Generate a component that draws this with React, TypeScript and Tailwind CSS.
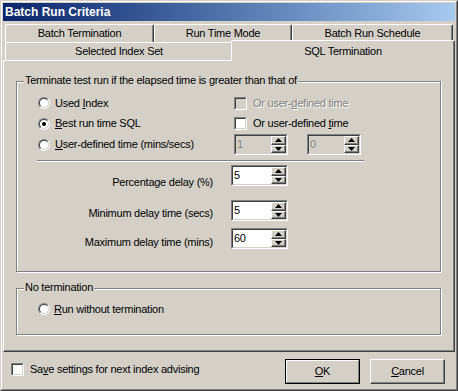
import type { ReactNode } from "react";

const FONT = "font-['Liberation_Sans',Arial,sans-serif] text-[11px] leading-[13px] tracking-[-0.25px]";

function U({ children }: { children: ReactNode }) {
  return <span className="underline underline-offset-[1px]">{children}</span>;
}

function Radio({ checked = false }: { checked?: boolean }) {
  return (
    <span className="flex h-[12px] w-[12px] shrink-0 rounded-full border border-t-[#808080] border-l-[#808080] border-r-white border-b-white">
      <span className="flex h-[10px] w-[10px] items-center justify-center rounded-full border border-t-[#404040] border-l-[#404040] border-r-[#d4d0c8] border-b-[#d4d0c8] bg-white">
        {checked && <span className="h-[4px] w-[4px] rounded-full bg-black" />}
      </span>
    </span>
  );
}

function Check({ disabled = false }: { disabled?: boolean }) {
  return (
    <span className="flex h-[13px] w-[13px] shrink-0 border border-t-[#808080] border-l-[#808080] border-r-white border-b-white">
      <span
        className={`h-[11px] w-[11px] border border-t-[#404040] border-l-[#404040] border-r-[#d4d0c8] border-b-[#d4d0c8] ${
          disabled ? "bg-[#d4d0c8]" : "bg-white"
        }`}
      />
    </span>
  );
}

function Arrow({ up }: { up?: boolean }) {
  return (
    <svg width="7" height="4" viewBox="0 0 7 4" className="block">
      {up ? <path d="M3.5 0 L7 4 L0 4 Z" fill="#000" /> : <path d="M0 0 L7 0 L3.5 4 Z" fill="#000" />}
    </svg>
  );
}

function SpinHalf({ up }: { up?: boolean }) {
  return (
    <div className="flex flex-1 items-center justify-center border border-t-white border-l-white border-r-[#404040] border-b-[#404040] bg-[#d4d0c8] shadow-[inset_-1px_-1px_0_#808080]">
      <Arrow up={up} />
    </div>
  );
}

function Spin({ value, disabled = false, className }: { value: string; disabled?: boolean; className: string }) {
  return (
    <div className={`flex h-[21px] shrink-0 border border-t-[#808080] border-l-[#808080] border-r-white border-b-white ${className}`}>
      <div
        className={`flex flex-1 border border-t-[#404040] border-l-[#404040] border-r-[#d4d0c8] border-b-[#d4d0c8] ${
          disabled ? "bg-[#d4d0c8]" : "bg-white"
        }`}
      >
        <span className={`flex-1 pl-[1px] pt-[2px] ${disabled ? "text-[#808080]" : "text-black"}`}>{value}</span>
        <div className="flex w-[15px] flex-col">
          <SpinHalf up />
          <SpinHalf />
        </div>
      </div>
    </div>
  );
}

function Tab({ label, className, selected = false }: { label: string; className: string; selected?: boolean }) {
  return (
    <div
      className={`flex items-center justify-center rounded-t-[2px] border-l border-t border-r border-l-white border-t-white border-r-[#404040] bg-[#d4d0c8] shadow-[inset_-1px_0_0_#808080] ${
        selected ? "relative z-10 -mb-[1px] h-[21px]" : "h-[18px]"
      } ${className}`}
    >
      {label}
    </div>
  );
}

function Group({ label, className, children }: { label: string; className: string; children: ReactNode }) {
  return (
    <div className={`relative ml-[12px] w-[425px] border border-[#808080] shadow-[inset_1px_1px_0_#fff,1px_1px_0_#fff] ${className}`}>
      <span className="absolute left-[7px] top-[-8px] bg-[#d4d0c8] px-[1px]">{label}</span>
      {children}
    </div>
  );
}

function Disabled({ children }: { children: ReactNode }) {
  return <span className="text-[#808080] [text-shadow:1px_1px_0_#fff]">{children}</span>;
}

function DelayRow({ label, value, className, labelTop }: { label: string; value: string; className: string; labelTop: string }) {
  return (
    <div className={`flex items-start ${className}`}>
      <span className={`w-[175px] text-right ${labelTop}`}>{label}</span>
      <Spin value={value} className="ml-[18px] w-[57px]" />
    </div>
  );
}

export default function App() {
  return (
    <div className={`h-[391px] w-[458px] border border-t-[#d4d0c8] border-l-[#d4d0c8] border-r-[#404040] border-b-[#404040] bg-[#d4d0c8] text-black ${FONT}`}>
      <div className="flex h-full flex-col border border-t-white border-l-white border-r-[#808080] border-b-[#808080] p-[1px]">
        <div className="flex h-[18px] shrink-0 items-center bg-linear-to-r from-[#0a246a] to-[#a6caf0] pl-[2px] text-[12px] font-bold tracking-normal text-white">
          Batch Run Criteria
        </div>

        <div className="mt-[3px] flex pl-[2px]">
          <Tab label="Batch Termination" className="w-[149px]" />
          <Tab label="Run Time Mode" className="w-[138px]" />
          <Tab label="Batch Run Schedule" className="w-[161px]" />
        </div>
        <div className="flex h-[18px] items-end pl-[2px]">
          <Tab label="Selected Index Set" className="w-[228px]" />
          <Tab label="SQL Termination" selected className="-ml-[2px] w-[224px]" />
        </div>

        <div className="h-[292px] shrink-0 border border-t-white border-l-white border-r-[#404040] border-b-[#404040] shadow-[inset_-1px_-1px_0_#808080]">
          <Group label="Terminate test run if the elapsed time is greater than that of" className="mt-[20px] h-[191px]">
            <div className="pl-[21px] pt-[11px]">
              <div className="grid grid-cols-[196px_auto]">
                <div className="flex h-[20px] items-center gap-[5px]">
                  <Radio />
                  <span>
                    Used <U>I</U>ndex
                  </span>
                </div>
                <div className="flex h-[20px] items-center gap-[6px]">
                  <Check disabled />
                  <Disabled>
                    Or user-<U>d</U>efined time
                  </Disabled>
                </div>

                <div className="flex h-[21px] items-center gap-[5px]">
                  <Radio checked />
                  <span>
                    <U>B</U>est run time SQL
                  </span>
                </div>
                <div className="flex h-[21px] items-center gap-[6px]">
                  <Check />
                  <span>
                    Or user-defined <U>t</U>ime
                  </span>
                </div>

                <div className="flex h-[21px] items-center gap-[5px]">
                  <Radio />
                  <span>
                    <U>U</U>ser-defined time (mins/secs)
                  </span>
                </div>
                <div className="flex h-[21px] gap-[19px]">
                  <Spin value="1" disabled className="w-[54px]" />
                  <Spin value="0" disabled className="w-[54px]" />
                </div>
              </div>

              <div className="-ml-[1px] mt-[5px] h-[2px] w-[327px] border-t border-b border-t-[#808080] border-b-white" />

              <DelayRow label="Percentage delay (%)" value="5" className="mt-[3px]" labelTop="mt-[11px]" />
              <DelayRow label="Minimum delay time (secs)" value="5" className="mt-[11px]" labelTop="mt-[7px]" />
              <DelayRow label="Maximum delay time (mins)" value="60" className="mt-[7px]" labelTop="mt-[8px]" />
            </div>
          </Group>

          <Group label="No termination" className="mt-[16px] h-[47px]">
            <div className="mt-[10px] flex h-[20px] items-center gap-[4px] pl-[21px]">
              <Radio />
              <span>
                <U>R</U>un without termination
              </span>
            </div>
          </Group>
        </div>

        <div className="flex flex-1 items-start">
          <div className="ml-[8px] mt-[11px] flex h-[13px] items-center gap-[6px]">
            <Check />
            <span>
              Sa<U>v</U>e settings for next index advising
            </span>
          </div>
          <div className="ml-auto mr-[10px] mt-[7px] flex gap-[10px]">
            <button className="h-[25px] w-[75px] border border-black">
              <span className="flex h-full w-full items-center justify-center border border-t-white border-l-white border-r-[#808080] border-b-[#808080]">
                <U>O</U>K
              </span>
            </button>
            <button className="flex h-[25px] w-[75px] items-center justify-center border border-t-white border-l-white border-r-[#404040] border-b-[#404040] shadow-[inset_-1px_-1px_0_#808080]">
              <span>
                <U>C</U>ancel
              </span>
            </button>
          </div>
        </div>
      </div>
    </div>
  );
}
